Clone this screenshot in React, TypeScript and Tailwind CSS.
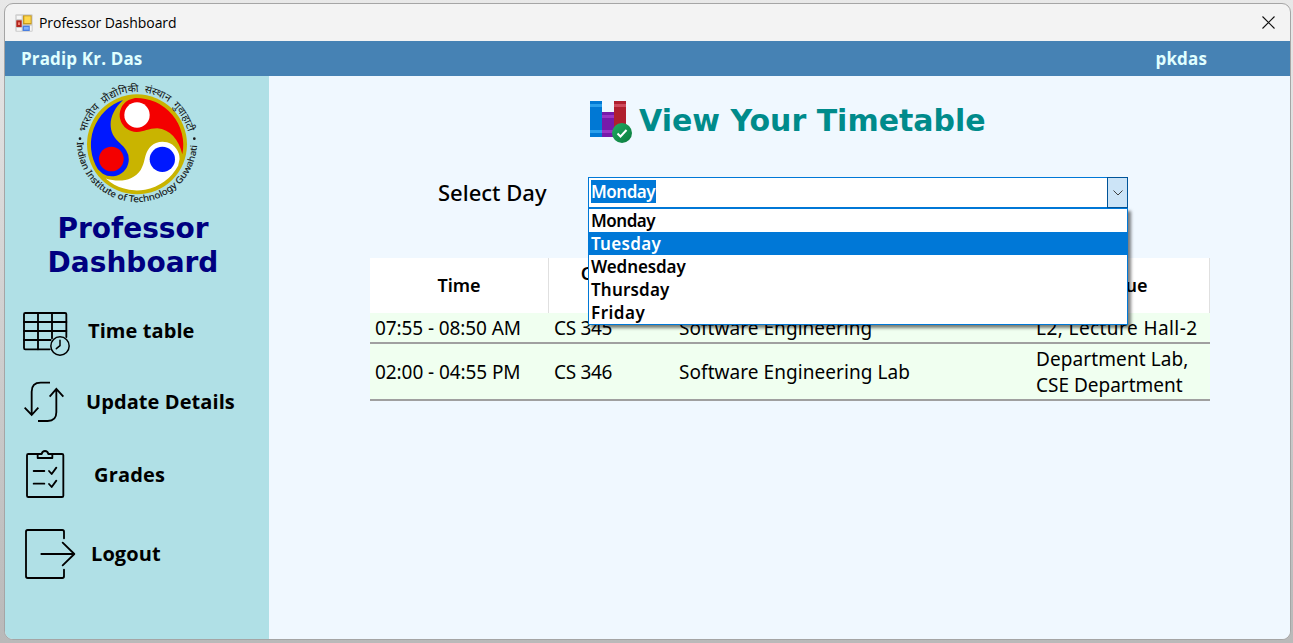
const LOBE = "M 337 235 A 141 141 0 0 0 195 66 L 176 72 A 51 51 0 0 0 201 168 C 222 168 235 157 262 157 C 300 160 326 190 337 235 Z";

function FormIcon() {
  return (
    <svg viewBox="45 39 54 54" className="h-[18px] w-[18px] shrink-0">
      <rect x="46" y="40" width="52" height="52" rx="3" fill="#cdcdcd" />
      <path d="M50 44h15v10H50z M50 81h15v8H50z M90 74h5v15h-5z" fill="#f6f6f6" />
      <rect x="49" y="58" width="16" height="20" fill="#b5241c" />
      <rect x="54" y="64" width="6" height="8" fill="#f08070" />
      <rect x="69" y="43" width="26" height="27" fill="#c99a1c" />
      <rect x="73" y="46" width="19" height="20" fill="#ffd84c" />
      <rect x="68" y="74" width="21" height="16" fill="#4a7fe0" />
      <rect x="72" y="78" width="14" height="8" fill="#7fb0ff" />
    </svg>
  );
}

function Emblem() {
  return (
    <svg viewBox="0 0 405 405" className="h-[135px] w-[135px]">
      <defs>
        <path id="arc-top" d="M 48 170 A 157 157 0 0 1 354 170" />
        <path id="arc-bottom" d="M 21 198 A 180 180 0 1 0 381 198" />
      </defs>
      <circle cx="201" cy="205" r="150" fill="#c9b400" />
      <path d={LOBE} fill="#f40000" />
      <path d={LOBE} fill="#ffffff" transform="rotate(120 201 205)" />
      <path d={LOBE} fill="#0018ff" transform="rotate(240 201 205)" />
      <circle cx="201" cy="117" r="38" fill="#ffffff" />
      <circle cx="124" cy="249" r="37" fill="#f40000" />
      <circle cx="277" cy="250" r="38" fill="#0018ff" />
      <circle cx="30" cy="188" r="4" fill="#1a1a1a" />
      <circle cx="373" cy="188" r="4" fill="#1a1a1a" />
      <text className="font-['Noto_Sans',sans-serif] text-[31px] [word-spacing:8px]" fill="#111">
        <textPath href="#arc-top" textLength="420" lengthAdjust="spacingAndGlyphs">भारतीय प्रौद्योगिकी संस्थान गुवाहाटी</textPath>
      </text>
      <text className="font-['Noto_Sans',sans-serif] text-[27px]" fill="#111" stroke="#111" strokeWidth="0.4">
        <textPath href="#arc-bottom" textLength="556" lengthAdjust="spacingAndGlyphs">Indian Institute of Technology Guwahati</textPath>
      </text>
    </svg>
  );
}

const stroke = { fill: "none", stroke: "#000", strokeWidth: 5.5, strokeLinecap: "round", strokeLinejoin: "round" } as const;

function TimetableIcon() {
  return (
    <svg viewBox="66 318 147 138" className="h-[46px] w-[49px] shrink-0" {...stroke}>
      <path d="M199 396V328a4 4 0 0 0-4-4H76a4 4 0 0 0-4 4v101a4 4 0 0 0 4 4h73" />
      <path d="M72 351H199M72 378H199M72 405H152M114 324V433M156 324V400" />
      <circle cx="180" cy="423" r="27.5" strokeWidth="4.5" />
      <path d="M180 406V422L169 431" strokeWidth="4.5" />
    </svg>
  );
}

function UpdateIcon() {
  return (
    <svg viewBox="66 45 132 132" className="h-[44px] w-[44px] shrink-0" {...stroke} strokeWidth="5.5" strokeLinecap="butt" strokeLinejoin="miter">
      <path d="M150 53H122Q95 53 95 80V150M74 128L95 150L115 128" />
      <path d="M114 168H143Q169 168 169 142V72M149 95L169 72L190 95" />
    </svg>
  );
}

function GradesIcon() {
  return (
    <svg viewBox="75 252 120 150" className="h-[50px] w-[40px] shrink-0" {...stroke}>
      <path d="M113 267H85a4 4 0 0 0-4 4v121a4 4 0 0 0 4 4h101a4 4 0 0 0 4-4V271a4 4 0 0 0-4-4H157" />
      <path d="M113 267H125Q127 258 135 258Q143 258 145 267H157V279H113Z" />
      <path d="M101 318H133M147 318L155 327L169 308M101 356H133M147 357L155 366L169 347" />
    </svg>
  );
}

function LogoutIcon() {
  return (
    <svg viewBox="72 75 156 156" className="h-[52px] w-[52px] shrink-0" {...stroke}>
      <path d="M192 106V86Q192 81 187 81H83Q78 81 78 86V220Q78 225 83 225H187Q192 225 192 220V200" />
      <path d="M124 153H222M188 119L223 153L188 187" />
    </svg>
  );
}

function BooksIcon() {
  return (
    <svg viewBox="0 0 42 42" className="h-[42px] w-[42px] shrink-0">
      <defs>
        <linearGradient id="ok" x1="0" y1="0" x2="1" y2="1">
          <stop offset="0" stopColor="#21ad64" />
          <stop offset="1" stopColor="#0b7a3c" />
        </linearGradient>
      </defs>
      <rect x="0" y="0" width="12" height="36" fill="#0078d4" />
      <rect x="0" y="3" width="12" height="3" fill="#2ba0ec" />
      <rect x="0" y="29" width="12" height="3" fill="#2ba0ec" />
      <rect x="12" y="11" width="12" height="25" fill="#7719aa" />
      <rect x="12" y="14" width="12" height="3" fill="#9a33c4" />
      <rect x="12" y="29" width="12" height="3" fill="#9a33c4" />
      <rect x="24" y="0" width="12" height="36" fill="#b01f2e" />
      <rect x="24" y="3" width="12" height="3" fill="#cf4a5c" />
      <circle cx="32" cy="32" r="10" fill="url(#ok)" />
      <path d="M27.5 32.5L30.5 35.5L36.5 29" fill="none" stroke="#fff" strokeWidth="2" />
    </svg>
  );
}

const days = [
  { name: "Monday", className: "tracking-[-0.5px]" },
  { name: "Tuesday", className: "bg-[#0078d7] text-white tracking-[0.3px]" },
  { name: "Wednesday", className: "tracking-[-0.1px]" },
  { name: "Thursday", className: "tracking-[0.2px]" },
  { name: "Friday", className: "tracking-[0.5px]" },
];

function DaySelect() {
  return (
    <div className="relative h-[31px] w-[540px] font-['Noto_Sans',sans-serif] text-[17px] font-semibold leading-[23px]">
      <div className="flex h-[31px] border border-[#0078d7] bg-white">
        <div className="flex-1 pl-[2px] pt-[2px]">
          <span className="inline-block h-[23px] w-[65px] bg-[#0078d7] tracking-[-0.5px] text-white">Monday</span>
        </div>
        <div className="-my-px -mr-px flex w-[21px] items-center justify-center border border-[#005499] bg-[#cce4f7]">
          <svg viewBox="0 0 10 6" className="h-[6px] w-[10px]" fill="none" stroke="#404040" strokeWidth="1">
            <path d="M0.5 0.5L5 5L9.5 0.5" />
          </svg>
        </div>
      </div>
      <ul className="absolute left-0 top-[31px] z-10 w-[540px] border border-[#0078d7] bg-white text-black shadow-[3px_3px_3px_rgba(0,0,0,0.5)]">
        {days.map((d) => (
          <li key={d.name} className={`h-[23px] pl-[2px] ${d.className}`}>
            {d.name}
          </li>
        ))}
      </ul>
    </div>
  );
}

function Timetable() {
  return (
    <div className="w-[840px] font-['Noto_Sans',sans-serif] text-[19px] leading-[26px] text-black">
      <div className="grid h-[55px] grid-cols-[179px_125px_357px_179px] items-center bg-white text-center text-[18px] font-semibold">
        <div className="flex h-full items-center justify-center border-r border-[#e0e0e0] pb-[2px]">Time</div>
        <div className="h-full pt-[2px]">Course</div>
        <div />
        <div className="flex h-full items-center justify-center border-r border-[#e0e0e0] pb-[2px]">Venue</div>
      </div>
      <div className="grid h-[31px] grid-cols-[179px_125px_357px_179px] items-center border-b-2 border-[#a0a0a0] bg-[#f0fff0]">
        <div className="pl-[5px] tracking-[-0.1px]">07:55 - 08:50 AM</div>
        <div className="pl-[5px] tracking-[-0.3px]">CS 345</div>
        <div className="pl-[5px] tracking-[0.05px]">Software Engineering</div>
        <div className="pl-[5px] tracking-[0.42px]">L2, Lecture Hall-2</div>
      </div>
      <div className="grid h-[57px] grid-cols-[179px_125px_357px_179px] items-center border-b-2 border-[#a0a0a0] bg-[#f0fff0]">
        <div className="pl-[5px] tracking-[-0.08px]">02:00 - 04:55 PM</div>
        <div className="pl-[5px] tracking-[-0.3px]">CS 346</div>
        <div className="pl-[5px] tracking-[0.06px]">Software Engineering Lab</div>
        <div className="pl-[5px]">
          <span className="tracking-[0.1px]">Department Lab,</span>
          <br />
          CSE Department
        </div>
      </div>
    </div>
  );
}

export default function App() {
  return (
    <div className="h-[643px] w-[1293px] overflow-hidden bg-gradient-to-b from-[#e8e8e8] to-[#b9b9b9] pl-[4px] pt-[3px]">
      <div className="flex h-[637px] w-[1287px] flex-col overflow-hidden rounded-[9px] border border-[#a5a5a5] bg-[#f3f3f3]">
        <div className="flex h-[37px] shrink-0 items-center pl-[10px]">
          <FormIcon />
          <span className="ml-[6px] flex-1 font-['Open_Sans',sans-serif] text-[14px] tracking-[-0.05px] text-black">Professor Dashboard</span>
          <svg viewBox="0 0 13 13" className="mr-[15px] h-[13px] w-[13px]" stroke="#111" strokeWidth="1.1">
            <path d="M0.5 0.5L12.5 12.5M12.5 0.5L0.5 12.5" />
          </svg>
        </div>
        <div className="flex h-[35px] shrink-0 items-center justify-between bg-[#4682b4] pl-[16px] pr-[83px] pt-[1px] font-['Open_Sans',sans-serif] text-[17px] font-bold tracking-[0.15px] text-[#e0ffff]">
          <span>Pradip Kr. Das</span>
          <span>pkdas</span>
        </div>
        <div className="flex flex-1">
          <aside className="w-[264px] bg-[#b0e0e6]">
            <div className="h-[136px] pl-[65px]">
              <Emblem />
            </div>
            <h1 className="w-[256px] text-center font-['DejaVu_Sans',sans-serif] text-[28px] font-bold leading-[34px] text-[#000080]">
              Professor
              <br />
              Dashboard
            </h1>
            <nav className="font-['Open_Sans',sans-serif] text-[20px] font-bold leading-[24px] tracking-[0.08px] text-black">
              <div className="mt-[31px] flex h-[46px] items-center pl-[17px]">
                <TimetableIcon />
                <span className="ml-[17px] pb-[6px]">Time table</span>
              </div>
              <div className="mt-[23px] flex h-[44px] items-center pl-[17px]">
                <UpdateIcon />
                <span className="ml-[20px]">Update Details</span>
              </div>
              <div className="mt-[25px] flex h-[50px] items-center pl-[20px]">
                <GradesIcon />
                <span className="ml-[29px] pt-[1px] tracking-[0.2px]">Grades</span>
              </div>
              <div className="mt-[29px] flex h-[52px] items-center pl-[19px]">
                <LogoutIcon />
                <span className="ml-[15px]">Logout</span>
              </div>
            </nav>
          </aside>
          <main className="flex-1 bg-[#f0f8ff]">
            <div className="flex h-[101px] pl-[321px] pt-[25px]">
              <BooksIcon />
              <h2 className="ml-[7px] font-['DejaVu_Sans',sans-serif] text-[30px] font-bold leading-[40px] text-[#008b8b]">View Your Timetable</h2>
            </div>
            <div className="flex h-[31px] items-center pl-[169px]">
              <span className="w-[150px] font-['Noto_Sans',sans-serif] text-[22px] font-medium leading-[31px] text-black">Select Day</span>
              <DaySelect />
            </div>
            <div className="pl-[101px] pt-[50px]">
              <Timetable />
            </div>
          </main>
        </div>
      </div>
    </div>
  );
}
